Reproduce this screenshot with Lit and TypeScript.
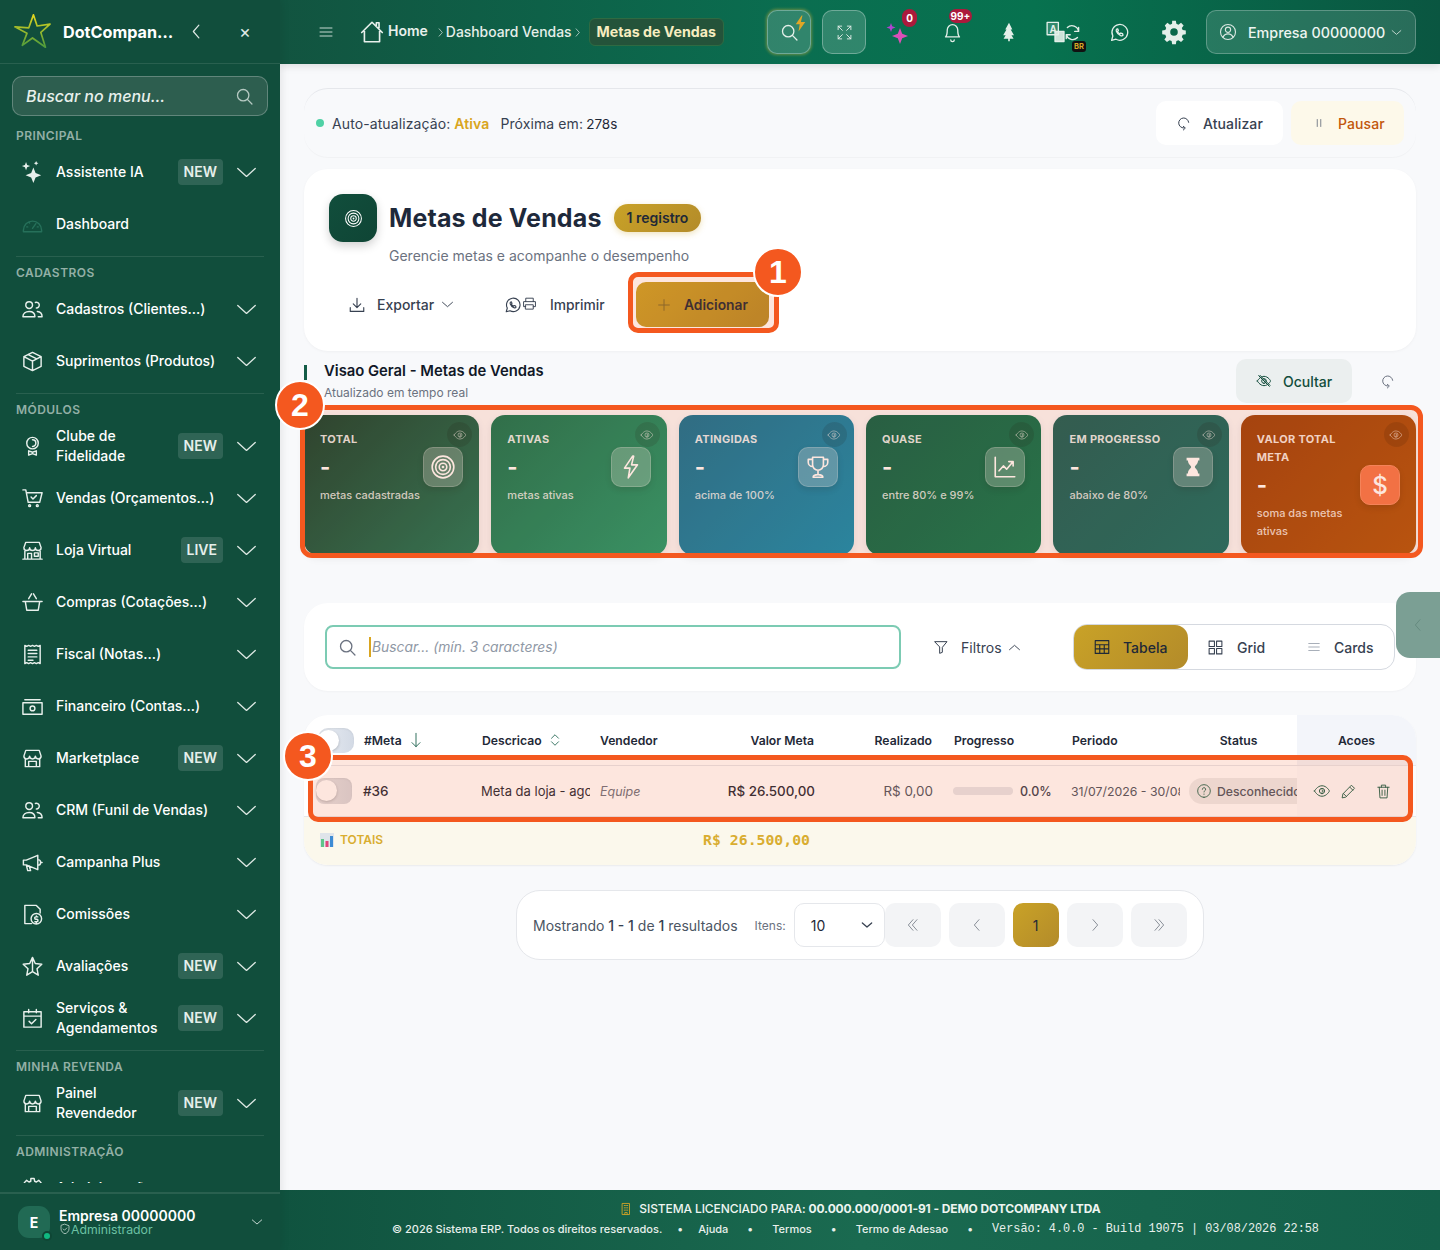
import { LitElement, html, css } from "lit";
import { customElement } from "lit/decorators.js";

const icon = (d: string, size = 20, sw = 1.5) => html`<svg viewBox="0 0 24 24" width=${size} height=${size} fill="none" stroke="currentColor" stroke-width=${sw} stroke-linecap="round" stroke-linejoin="round"><path d=${d}></path></svg>`;
const solid = (d: string, size = 20) => html`<svg viewBox="0 0 24 24" width=${size} height=${size} fill="currentColor"><path d=${d}></path></svg>`;

const I = {
  down: "M4 8.500l8 7 8-7",
  wide: "M2 7.500l10 9 10-9",
  up: "M4 15.500l8-7 8 7",
  left: "M15 4l-7 8 7 8",
  right: "M9 4l7 8-7 8",
  dleft: "M12 4l-7 8 7 8M18 4l-7 8 7 8",
  dright: "M6 4l7 8-7 8M12 4l7 8-7 8",
  search: "M20.500 20.500l-5.200-5.200M10.500 17a6.500 6.500 0 1 0 0-13 6.500 6.500 0 0 0 0 13z",
  spark: "M13.500 7l2.400 6.100L22 15.500l-6.100 2.400L13.500 24l-2.400-6.100L5 15.500l6.100-2.400zM5.500 1l1.200 3.300L10 5.500 6.700 6.700 5.500 10 4.300 6.700 1 5.500l3.300-1.200zM16.500 0l.8 1.700 1.700.8-1.700.8-.8 1.700-.8-1.700-1.700-.8 1.700-.8z",
  gauge: "M2.500 18a9.500 9.500 0 1 1 19 0v1.500h-19zM12 16l3.500-5M6 14.500h1M17 14.500h1M8.500 10l.5.5",
  people: "M8.500 11a3.500 3.500 0 1 0 0-7 3.500 3.500 0 0 0 0 7zM2 19.500c0-3.500 3-5.500 6.500-5.500s6 2 6 5.500zM16 10.500a3 3 0 1 0-1-5.800M17 14c3 .3 5 2.200 5 5.500h-4",
  box: "M12 2.500l9 4.500v10l-9 4.500L3 17V7zM3 7l9 4.500L21 7M12 11.500v10M7.500 4.800l9 4.500",
  award: "M12 14.500a6 6 0 1 0 0-12 6 6 0 0 0 0 12zM12 12a3.500 3.500 0 1 0 0-7M8 16.500l4 1.500 4-1.500V21l-4-1.500L8 21z",
  cart: "M2 3h3l2.500 13h12L22 6H6M9 20.500a1 1 0 1 0 0-2 1 1 0 0 0 0 2zM17 20.500a1 1 0 1 0 0-2 1 1 0 0 0 0 2zM10.500 10.500l2 2 3.500-3.500",
  shop: "M3 9l2-5.500h14L21 9M3 9a3 3 0 0 0 6 0 3 3 0 0 0 6 0 3 3 0 0 0 6 0M4 11.500V21h16v-9.500M2 21h20M7 21v-6h4v6M14 14.500h4v3.500h-4z",
  basket: "M2 11h20M4.500 11l1.500 9h12l1.500-9M8 8l3-5M16 8l-3-5",
  receipt: "M4 2.500l2 1 2-1 2 1 2-1 2 1 2-1 2 1 2-1v19l-2-1-2 1-2-1-2 1-2-1-2 1-2-1-2 1zM7.500 7.500h9M7.500 11h9M7.500 14.500h9M7.500 18h5",
  cash: "M2 8h20v12H2zM4 5h16M12 16.500a2.500 2.500 0 1 0 0-5 2.500 2.500 0 0 0 0 5z",
  store: "M3 9.500l2-6h14l2 6M3 9.500a3 3 0 0 0 6 0 3 3 0 0 0 6 0 3 3 0 0 0 6 0M4.500 12v8.500h15V12M8 20.500V15h8v5.500",
  mega: "M2.500 9.500v5h3l12 5V4.500l-12 5zM5.500 14.500l1.500 6h3l-1.500-5M17.500 9a3 3 0 0 1 0 6M21 12h1",
  comm: "M4 2.500h12l4 4v4M4 2.500v19h7M16 22a5.500 5.500 0 1 0 0-11 5.500 5.500 0 0 0 0 11zM17.500 14.500h-2a1 1 0 0 0 0 2.500h1a1 1 0 0 1 0 2.500h-2M16 13.500v1M16 19.500v1",
  star: "M12 2.500l2.900 6.300 6.800.8-5 4.700 1.300 6.800L12 17.300V2.500zM12 2.500L9.100 8.800l-6.800.8 5 4.700L6 21.100l6-3.800",
  cal: "M3 5h18v16H3zM3 9.500h18M8 2.500V6M16 2.500V6M8.500 15l2.500 2.500 4.500-4.500",
  menu: "M3 6h18M3 12h18M3 18h18",
  home: "M2.500 12.500L12 3l9.500 9.500M5 10v11h14V10M16 6V3.500h2.500V8",
  expand: "M3 8V3h5M3 3l6 6M21 8V3h-5M21 3l-6 6M3 16v5h5M3 21l6-6M21 16v5h-5M21 21l-6-6",
  bell: "M12 3a6 6 0 0 0-6 6c0 6-2 8-2 8h16s-2-2-2-8a6 6 0 0 0-6-6zM10 20.500a2 2 0 0 0 4 0",
  wa: "M3 21l1.400-5A9 9 0 1 1 8 19.700zM9 8c-.8.500-1 1.500-.6 2.700.8 2.200 2.700 4 4.900 4.900 1.200.400 2.200.200 2.700-.600l-.5-1.600-2-.8-1 1c-1.200-.6-2.200-1.600-2.800-2.800l1-1-.8-2z",
  user: "M12 22a10 10 0 1 0 0-20 10 10 0 0 0 0 20zM12 12.500a3.500 3.500 0 1 0 0-7 3.500 3.500 0 0 0 0 7zM5.500 19c1-3 3.500-4.500 6.500-4.500s5.500 1.500 6.500 4.500",
  refresh: "M19 11a7.500 7.500 0 1 0-7.500 8.500M11 22.500l3-3-3-2.500",
  pause: "M9 6v12M15 6v12",
  dl: "M12 3v12M7 10.500l5 5 5-5M3 15.500V20.500h18v-5",
  printer: "M6 9V3.500h12V9M6 17H2.500V9h19v8H18M6 14h12v7H6z",
  plus: "M12 4v16M4 12h16",
  eye: "M2 12s3.600-7 10-7 10 7 10 7-3.600 7-10 7-10-7-10-7zM12 15.500a3.500 3.500 0 1 0 0-7 3.500 3.500 0 0 0 0 7zM12 13.500a1.500 1.500 0 1 0 0-3",
  eyeoff: "M2 12s3.600-7 10-7 10 7 10 7-3.600 7-10 7-10-7-10-7zM12 15.500a3.500 3.500 0 1 0 0-7 3.500 3.500 0 0 0 0 7zM4 4l16 16M6 3.500l15 15",
  target: "M12 22a10 10 0 1 0 0-20 10 10 0 0 0 0 20zM12 18.800a6.800 6.800 0 1 0 0-13.600 6.800 6.800 0 0 0 0 13.600zM12 15.500a3.500 3.500 0 1 0 0-7 3.500 3.500 0 0 0 0 7zM12 12.500a.5.500 0 1 0 0-1 .5.500 0 0 0 0 1z",
  bolt: "M13.500 2L6 13h5l-1.500 9L18 10h-5.500l2-8z",
  trophy: "M7 3h10v7a5 5 0 0 1-10 0zM7 5H3v2.500A4 4 0 0 0 7 11.500M17 5h4v2.500a4 4 0 0 1-4 4M12 15v4M7.500 21.500c0-2 2-2.500 4.500-2.500s4.500.500 4.500 2.500z",
  chart: "M3 3v18h18M6.500 15.500l4-4.500 3 3 6-7M15.500 7h4v4",
  funnel: "M3 4h18l-7 8.500V20l-4 1.500v-9z",
  grid: "M3 3h7.500v7.500H3zM13.500 3H21v7.500h-7.500zM3 13.500h7.500V21H3zM13.500 13.500H21V21h-7.500z",
  table: "M3 3.500h18v17H3zM3 9h18M3 14.500h18M9 9v11.500M15 9v11.500",
  pen: "M16.500 3.500l4 4L8 20l-5 1 1-5zM14 6l4 4M5 15l4 4",
  trash: "M4 6h16M9 6V3h6v3M6 6l1 15h10l1-15M10 10v7.500M14 10v7.500",
  help: "M12 21.500a9.500 9.500 0 1 0 0-19 9.500 9.500 0 0 0 0 19zM9.500 9.500a2.500 2.500 0 1 1 3.500 2.300c-.7.300-1 .8-1 1.700M12 16.500v.5",
  shield: "M12 2.500l8 3v6c0 5-3.500 8.500-8 10-4.500-1.500-8-5-8-10v-6zM8.500 12l2.500 2.500 4.500-4.500",
  building: "M6 2.500h12v19H6zM9 6h2M13 6h2M9 10h2M13 10h2M9 14h2M13 14h2M10 21.500v-3.500h4v3.500",
  sortDown: "M12 2v20M6 16l6 6 6-6",
  sortBoth: "M6 9l6-6 6 6M6 15l6 6 6-6",
};
const GEAR = "M10.300 1.500h3.400l.5 2.900 1.900.8 2.400-1.700 2.400 2.400-1.700 2.400.8 1.900 2.900.5v3.400l-2.900.5-.8 1.900 1.700 2.400-2.400 2.400-2.400-1.700-1.900.8-.5 2.900h-3.400l-.5-2.900-1.900-.8-2.400 1.700-2.400-2.400 1.700-2.400-.8-1.900-2.900-.5v-3.400l2.900-.5.8-1.900L3.500 5.900l2.400-2.400 2.400 1.700 1.900-.8zM12 8.500a3.500 3.500 0 1 0 0 7 3.500 3.500 0 0 0 0-7z";
const TREE = "M12 1l4 8h-2l4 7h-3l2.500 4H13v3h-2v-3H5.500L8 16H5l4-7H7.500z";
const HOUR = "M5 2h14v3h-1.500c0 4-3 5-3.500 7 .5 2 3.500 3 3.500 7H19v3H5v-3h1.500c0-4 3-5 3.500-7-.5-2-3.500-3-3.500-7H5z";
const FONT = css`* { box-sizing: border-box; }`;

type Item = { label: string[]; d: string; badge?: string; chev?: boolean; dim?: boolean };
type Section = { title: string; items: Item[] };

const MENU: Section[] = [
  { title: "PRINCIPAL", items: [
    { label: ["Assistente IA"], d: I.spark, badge: "NEW", chev: true },
    { label: ["Dashboard"], d: I.gauge, dim: true },
  ] },
  { title: "CADASTROS", items: [
    { label: ["Cadastros (Clientes...)"], d: I.people, chev: true },
    { label: ["Suprimentos (Produtos)"], d: I.box, chev: true },
  ] },
  { title: "MÓDULOS", items: [
    { label: ["Clube de", "Fidelidade"], d: I.award, badge: "NEW", chev: true },
    { label: ["Vendas (Orçamentos...)"], d: I.cart, chev: true },
    { label: ["Loja Virtual"], d: I.shop, badge: "LIVE", chev: true },
    { label: ["Compras (Cotações...)"], d: I.basket, chev: true },
    { label: ["Fiscal (Notas...)"], d: I.receipt, chev: true },
    { label: ["Financeiro (Contas...)"], d: I.cash, chev: true },
    { label: ["Marketplace"], d: I.store, badge: "NEW", chev: true },
    { label: ["CRM (Funil de Vendas)"], d: I.people, chev: true },
    { label: ["Campanha Plus"], d: I.mega, chev: true },
    { label: ["Comissões"], d: I.comm, chev: true },
    { label: ["Avaliações"], d: I.star, badge: "NEW", chev: true },
    { label: ["Serviços &", "Agendamentos"], d: I.cal, badge: "NEW", chev: true },
  ] },
  { title: "MINHA REVENDA", items: [
    { label: ["Painel", "Revendedor"], d: I.store, badge: "NEW", chev: true },
  ] },
  { title: "ADMINISTRAÇÃO", items: [
    { label: ["Administração"], d: GEAR, chev: true },
  ] },
];

@customElement("app-sidebar")
class AppSidebar extends LitElement {
  static styles = [FONT, css`
    :host { display: flex; flex-direction: column; width: 280px; height: 1250px; flex: none; background: #114e3c; color: #fff; font-family: Inter, "Liberation Sans", sans-serif; box-shadow: 2px 0 8px rgba(0,0,0,.08); position: relative; z-index: 3; }
    .brand { height: 64px; flex: none; display: flex; align-items: center; padding-left: 14px; border-bottom: 1px solid rgba(255,255,255,.1); }
    .brand .name { width: 110px; margin-left: 12px; font-size: 16.200px; font-weight: 700; white-space: nowrap; }
    .brand .back { margin-left: 14px; display: flex; color: #dfe9e5; }
    .brand .close { margin-left: 33px; font-size: 18px; font-weight: 400; color: #dfe9e5; line-height: 1; }
    .find { flex: none; margin: 12px 12px 3px; height: 40px; display: flex; align-items: center; justify-content: space-between; padding: 0 12px 0 13px; background: #2d5e4f; border: 1px solid rgba(255,255,255,.25); border-radius: 10px; font-size: 16px; font-weight: 500; font-style: italic; color: #e8f0ec; }
    .find span { display: flex; color: #b5c9c2; }
    nav { flex: 1; overflow: hidden; height: 0; min-height: 0; margin-bottom: 9px; }
    .section { margin-top: 6px; padding-top: 4px; border-top: 1px solid rgba(255,255,255,.1); margin-left: 16px; margin-right: 16px; }
    .section:first-child { border-top: 0; margin-top: 0; padding-top: 5px; }
    .title { height: 22px; line-height: 24px; font-size: 12px; font-weight: 600; color: #93b0a6; letter-spacing: .45px; }
    .item { height: 52px; display: flex; align-items: center; margin: 0 -16px; padding-left: 20px; padding-right: 23px; }
    .item .ic { width: 24px; height: 24px; flex: none; display: flex; align-items: center; justify-content: center; color: #e8f0ec; }
    .item .ic.dim { color: #26705a; }
    .item .txt { flex: 1; margin-left: 12px; font-size: 14px; font-weight: 500; line-height: 20px; }
    .item .txt div { white-space: nowrap; }
    .badge { height: 26px; line-height: 26px; padding: 0 6px; background: rgba(255,255,255,.13); border-radius: 4px; font-size: 14px; font-weight: 600; color: #e6efeb; }
    .chev { display: flex; margin-left: 13px; color: #dde8e3; }
    .me { flex: none; height: 58px; display: flex; align-items: center; padding-left: 18px; border-top: 2px solid rgba(255,255,255,.1); }
    .ava { position: relative; width: 32px; height: 32px; border-radius: 11px; background: #216a54; display: flex; align-items: center; justify-content: center; font-size: 14px; font-weight: 700; }
    .ava i { position: absolute; right: -2px; bottom: -3px; width: 10px; height: 10px; border-radius: 50%; background: #10b981; border: 2px solid #0f4635; }
    .who { margin-left: 9px; flex: 1; }
    .who b { display: block; font-size: 14px; font-weight: 600; line-height: 14px; }
    .who span { display: flex; align-items: center; font-size: 12.300px; line-height: 13px; color: #6cc2a4; }
    .who span svg { color: #cfe0da; }
    .me .chev { margin: 0 16px 0 0; }
  `];

  render() {
    return html`
      <div class="brand">
        <svg viewBox="0 0 40 40" width="37" height="37" fill="none" stroke-width="1.800" stroke-linejoin="round">
          <defs><linearGradient id="st" x1="0" y1="0" x2="0" y2="1"><stop offset="0" stop-color="#e6d81e"></stop><stop offset="1" stop-color="#4c9a3c"></stop></linearGradient></defs>
          <path stroke="url(#st)" d="M21 2l4 12 14-2-10 9 5 16-14-10-11 8 5-13L1 15l15 1z"></path>
        </svg>
        <div class="name">DotCompan…</div>
        <span class="back">${icon(I.left, 19)}</span>
        <span class="close">×</span>
      </div>
      <div class="find">Buscar no menu...<span>${icon(I.search, 21)}</span></div>
      <nav>
        ${MENU.map((s) => html`
          <div class="section">
            <div class="title">${s.title}</div>
            ${s.items.map((it) => html`
              <div class="item">
                <span class="ic ${it.dim ? "dim" : ""}">${it.d === I.spark ? solid(it.d, 22) : icon(it.d, 23, 1.500)}</span>
                <div class="txt">${it.label.map((l) => html`<div>${l}</div>`)}</div>
                ${it.badge ? html`<span class="badge">${it.badge}</span>` : ""}
                ${it.chev ? html`<span class="chev">${icon(I.wide, 21)}</span>` : ""}
              </div>
            `)}
          </div>
        `)}
      </nav>
      <div class="me">
        <div class="ava">E<i></i></div>
        <div class="who"><b>Empresa 00000000</b><span>${icon(I.shield, 12)}Administrador</span></div>
        <span class="chev">${icon(I.down, 14)}</span>
      </div>
    `;
  }
}

@customElement("app-topbar")
class AppTopbar extends LitElement {
  static styles = [FONT, css`
    :host { display: flex; align-items: center; height: 64px; flex: none; padding: 0 24px 0 38px; background: linear-gradient(90deg, #125440 0%, #0a6e50 45%, #07724f 65%, #0a5641 100%); color: #fff; font-family: Inter, "Liberation Sans", sans-serif; box-shadow: 0 2px 8px rgba(0,0,0,.12); position: relative; z-index: 2; }
    .crumbs { display: flex; align-items: center; flex: 1; }
    .burger { display: flex; color: #c6d8d1; margin-right: 25px; }
    .home { display: flex; align-items: center; gap: 3px; color: #e8f0ec; }
    .home span { font-size: 14px; font-weight: 600; position: relative; top: -2px; }
    .sep { display: flex; margin: 0 1px 0 7px; color: #dce8e3; }
    .link { font-size: 13.900px; font-weight: 500; color: #e6efea; margin-left: -1px; }
    .sep.two { margin: 0 6px 0 0; }
    .cur { height: 28px; line-height: 26px; padding: 0 7px; background: #24533a; border: 1px solid #2f6a42; border-radius: 6px; font-size: 14.200px; font-weight: 700; color: #f7edc0; }
    .tools { display: flex; align-items: center; gap: 11px; }
    .tool { position: relative; width: 44px; height: 44px; display: flex; align-items: center; justify-content: center; color: #e3efe9; }
    .boxed { background: rgba(255,255,255,.16); border: 1px solid rgba(255,255,255,.3); border-radius: 10px; }
    .glow { box-shadow: 0 0 3px 1px rgba(216,180,60,.45); }
    .bolt { position: absolute; top: 3px; right: 0; color: #e0a626; display: flex; }
    .spk { margin-left: -1px; }
    .bl { margin-left: -1px; margin-right: 2px; }
    .num { position: absolute; background: #ab1a3c; color: #fff; font-size: 10px; font-weight: 700; line-height: 16px; height: 16px; min-width: 15px; border-radius: 9px; text-align: center; padding: 0 3px; }
    .n0 { top: -1px; right: 3px; height: 18px; line-height: 18px; }
    .n99 { top: -1px; right: 2px; height: 14px; line-height: 14px; width: 23px; padding: 0; }
    .br { position: absolute; right: 0; bottom: 2px; background: #111; color: #d5a826; font-size: 7.500px; font-weight: 700; line-height: 11px; padding: 0 2px; border-radius: 3px; }
    .letter { font-family: "Liberation Sans", sans-serif; font-size: 9px; font-weight: 700; fill: #e3efe9; }
    .co { width: 210px; height: 44px; margin-left: -1px; display: flex; align-items: center; padding: 0 12px 0 12px; background: rgba(255,255,255,.13); border: 1px solid rgba(255,255,255,.25); border-radius: 10px; }
    .co .nm { margin-left: 11px; flex: 1; font-size: 14.300px; font-weight: 500; color: #eef5f1; white-space: nowrap; }
    .co svg { flex: none; color: #dbe8e2; }
  `];

  render() {
    return html`
      <div class="crumbs">
        <span class="burger">${icon(I.menu, 16)}</span>
        <div class="home">${icon(I.home, 26, 1.500)}<span>Home</span></div>
        <span class="sep">${icon(I.right, 11)}</span>
        <span class="link">Dashboard Vendas</span>
        <span class="sep two">${icon(I.right, 11)}</span>
        <span class="cur">Metas de Vendas</span>
      </div>
      <div class="tools">
        <div class="tool boxed glow">${icon(I.search, 21)}<span class="bolt">${solid(I.bolt, 19)}</span></div>
        <div class="tool boxed">${icon(I.expand, 17, 1.300)}</div>
        <div class="tool spk">
          <svg viewBox="0 0 24 24" width="24" height="24">
            <path fill="#dd4fb8" d="M14 8l2.200 5.800L22 16l-5.800 2.200L14 24l-2.200-5.800L6 16l5.800-2.200z"></path>
            <path fill="#b044d0" d="M5 3l1.200 3.300L9.500 7.500 6.200 8.700 5 12 3.800 8.700.5 7.500l3.300-1.200z"></path>
          </svg>
          <span class="num n0">0</span>
        </div>
        <div class="tool bl">${icon(I.bell, 21)}<span class="num n99">99+</span></div>
        <div class="tool">${solid(TREE, 20)}</div>
        <div class="tool">
          <svg viewBox="0 0 32 24" width="36" height="27" fill="none" stroke="currentColor" stroke-width="1.200" stroke-linecap="round" stroke-linejoin="round">
            <rect x="1" y="3" width="10" height="11" fill="currentColor" fill-opacity=".2"></rect>
            <rect x="8" y="11" width="8" height="9" fill="currentColor" fill-opacity=".9"></rect>
            <text class="letter" x="3" y="12" stroke="none">A</text>
            <path d="M29 11a6 6 0 0 0-10-3.500M18 14a6 6 0 0 0 10 2.500M29 7.500V11h-3.500M18 17.500V14h3.500"></path>
          </svg>
          <span class="br">BR</span>
        </div>
        <div class="tool">${icon(I.wa, 21)}</div>
        <div class="tool">${solid(GEAR, 26)}</div>
        <div class="co">${icon(I.user, 18)}<span class="nm">Empresa 00000000</span>${icon(I.down, 13)}</div>
      </div>
    `;
  }
}

const STATS = [
  { cls: "s1", label: "TOTAL", sub: "metas cadastradas", d: I.target },
  { cls: "s2", label: "ATIVAS", sub: "metas ativas", d: I.bolt },
  { cls: "s3", label: "ATINGIDAS", sub: "acima de 100%", d: I.trophy },
  { cls: "s4", label: "QUASE", sub: "entre 80% e 99%", d: I.chart },
  { cls: "s5", label: "EM PROGRESSO", sub: "abaixo de 80%", d: HOUR },
  { cls: "s6", label: "VALOR TOTAL META", sub: "soma das metas ativas", d: "" },
];

@customElement("app-root")
class AppRoot extends LitElement {
  static styles = [FONT, css`
    :host { display: flex; position: relative; width: 1440px; height: 1250px; overflow: hidden; background: #f8f9fb; font-family: Inter, "Liberation Sans", sans-serif; color: #1f2937; }
    .right { flex: 1; display: flex; flex-direction: column; min-width: 0; }
    main { flex: 1; padding: 24px 24px 0; display: flex; flex-direction: column; }
    .auto { height: 69px; display: flex; align-items: center; padding: 0 12px; border-top: 1px solid #e5e7eb; border-radius: 24px; box-shadow: 0 1px 1px rgba(0,0,0,.03); font-size: 14px; letter-spacing: .1px; color: #374151; }
    .dot { width: 8px; height: 8px; border-radius: 50%; background: #4fd1a5; margin-right: 8px; }
    .auto b { color: #d9a520; font-weight: 600; margin-left: 4px; }
    .auto .next { margin-left: 11px; flex: 1; }
    .auto .next em { font-style: normal; color: #1f2937; font-weight: 400; font-size: 13.500px; letter-spacing: 0; margin-left: -1px; }
    .btn { display: inline-flex; align-items: center; height: 44px; border-radius: 10px; font-size: 14px; font-weight: 500; white-space: nowrap; }
    .up { width: 127px; background: #fff; padding-left: 20px; gap: 11px; color: #374151; }
    .pa { width: 113px; background: #fdf9ea; padding-left: 21px; gap: 12px; margin-left: 8px; color: #c2570c; }
    .pa span { color: #6b7280; display: flex; }

    .head { height: 182px; margin-top: 12px; background: #fff; border-radius: 24px; padding: 25px; box-shadow: 0 1px 3px rgba(0,0,0,.04); }
    .tl { display: flex; align-items: center; gap: 12px; }
    .logo { width: 48px; height: 48px; border-radius: 14px; background: linear-gradient(135deg, #114e3c, #0f4535); color: #fff; display: flex; align-items: center; justify-content: center; box-shadow: 0 4px 10px rgba(0,0,0,.18); }
    h1 { margin: 0; font-size: 25px; font-weight: 650; color: #1e293b; line-height: 48px; letter-spacing: .15px; }
    .count { padding: 0 13px; height: 28px; line-height: 28px; border-radius: 14px; background: linear-gradient(135deg, #c9a227, #b38b2a); font-size: 14px; font-weight: 600; color: #1f2937; box-shadow: 0 2px 6px rgba(201,162,39,.3); }
    .desc { margin: 2px 0 0 60px; font-size: 14px; line-height: 24px; color: #6b7280; }
    .acts { display: flex; gap: 12px; margin-top: 14px; height: 45px; }
    .ex { width: 143px; padding-left: 19px; color: #374151; height: 45px; gap: 11px; }
    .ex span { display: flex; margin-left: -5px; }
    .pr { width: 140px; padding-left: 20px; color: #374151; height: 45px; gap: 13px; font-size: 13.800px; }
    .pr span { display: flex; gap: 0; }
    .add { width: 133px; height: 45px; padding-left: 20px; gap: 12px; background: linear-gradient(135deg, #c9a227, #b38b2a); color: #1f2937; font-weight: 600; font-size: 13.800px; }
    .add span { display: flex; color: #7c6a2c; }

    .ov { display: flex; align-items: center; height: 44px; margin-top: 8px; }
    .ov .bar { width: 3px; height: 15px; background: #145c47; margin-right: 17px; align-self: flex-start; margin-top: 6px; }
    .ov h2 { margin: 0; font-size: 14.800px; font-weight: 600; color: #111827; line-height: 24px; }
    .ov p { margin: 0; font-size: 12px; line-height: 20px; color: #6b7280; }
    .ov .txt { flex: 1; }
    .hide { width: 116px; background: #ebefef; padding-left: 20px; gap: 11px; color: #124d3c; }
    .spin { width: 64px; display: flex; justify-content: center; padding-left: 8px; color: #6b7280; }

    .stats { display: grid; grid-template-columns: repeat(6, 1fr); gap: 12.200px; margin-top: 12px; }
    .stat { position: relative; height: 140px; padding: 15px 16px; border-radius: 14px; display: flex; color: #fff; align-items: flex-start; box-shadow: 0 3px 8px rgba(0,0,0,.08); }
    .s1 { background: linear-gradient(135deg, #0f4030, #17785a); }
    .s2 { background: linear-gradient(135deg, #107351, #1a9b6f); }
    .s3 { background: linear-gradient(135deg, #107194, #098db4); }
    .s4 { background: linear-gradient(135deg, #066048, #057850); }
    .s5 { background: linear-gradient(135deg, #135d58, #0c6d65); }
    .s6 { background: linear-gradient(135deg, #98400c, #af540c); }
    .inner { display: flex; align-items: center; width: 100%; }
    .col { flex: 1; min-width: 0; }
    .lab { font-size: 11px; font-weight: 700; line-height: 18px; letter-spacing: .3px; color: rgba(255,255,255,.88); }
    .val { font-size: 22px; font-weight: 700; line-height: 38px; }
    .sub { font-size: 11px; font-weight: 500; line-height: 18px; color: rgba(255,255,255,.8); white-space: normal; }
    .box { width: 40px; height: 40px; flex: none; border-radius: 10px; background: rgba(255,255,255,.25); border: 1px solid rgba(255,255,255,.2); display: flex; align-items: center; justify-content: center; color: #fff; font-size: 24px; font-weight: 500; box-shadow: 0 3px 6px rgba(0,0,0,.12); }
    .s6 .box { background: #f2764a; border-color: #f58b63; }
    .peek { position: absolute; top: 7px; right: 7px; width: 25px; height: 25px; border-radius: 50%; background: rgba(0,0,0,.12); display: flex; align-items: center; justify-content: center; color: rgba(255,255,255,.5); }

    .filters { margin-top: 48px; height: 88px; background: #fff; border-radius: 24px; display: flex; align-items: center; padding: 0 21px; box-shadow: 0 1px 2px rgba(0,0,0,.03); }
    .q { width: 576px; height: 44px; border: 2px solid #7ccbb3; border-radius: 8px; display: flex; align-items: center; padding-left: 10px; font-size: 13.850px; font-style: italic; color: #8f98a5; }
    .q span { display: flex; color: #6b7280; margin-right: 11px; }
    .q i { width: 2px; height: 20px; background: #d9a520; margin-right: 1px; }
    .fl { display: flex; align-items: center; margin-left: 32px; font-size: 14px; color: #374151; width: 140px; }
    .fl .tx { margin: 0 5px 0 12px; }
    .fl span { display: flex; }
    .seg { display: flex; width: 322px; height: 46px; border: 1px solid #d5d9e0; border-radius: 14px; }
    .seg div { display: flex; align-items: center; font-size: 14px; color: #374151; font-weight: 500; }
    .seg .on { width: 114px; padding-left: 19px; gap: 12px; background: linear-gradient(135deg, #c9a227, #b38b2a); border-radius: 13px; color: #1f2937; }
    .seg .g { width: 100px; padding-left: 19px; gap: 13px; }
    .seg .cd { padding-left: 19px; gap: 13px; }
    .seg .cd span { color: #9ca3af; display: flex; }

    .tbl { margin-top: 24px; height: 150px; background: #fff; border-radius: 24px; overflow: hidden; box-shadow: 0 1px 2px rgba(0,0,0,.06); }
    .row { display: grid; grid-template-columns: 50px repeat(7, 118px) 117px 119px; align-items: center; }
    .row > div { padding: 0 10px; white-space: nowrap; overflow: hidden; height: 100%; display: flex; align-items: center; }
    .hd { height: 51px; border-bottom: 1px solid #e5e7eb; font-size: 12.200px; font-weight: 600; color: #1f2937; }
    .bd { height: 51px; font-size: 13px; color: #1f2937; border-bottom: 1px solid #e5e7eb; }
    .row > .r { justify-content: flex-end; padding-right: 12px; }
    .bd > .r { padding-right: 11px; }
    .row > .c { justify-content: center; }
    .sort { display: flex; margin-left: 6px; color: #145c47; }
    .ac { background: #f3f5fa; }
    .bd .ac { background: #fcfcfd; }
    .row > .tg { padding: 0; overflow: visible; }
    .toggle { display: block; width: 42px; height: 25px; margin-left: 14px; border-radius: 10px; background: linear-gradient(90deg, #e8ecf2, #d3dae5); position: relative; box-shadow: inset 0 1px 2px rgba(0,0,0,.06); }
    .toggle i { position: absolute; left: 0; top: 2px; width: 21px; height: 21px; border-radius: 50%; background: #fff; box-shadow: 0 1px 3px rgba(0,0,0,.2); }
    .bd .toggle { margin-left: 12px; width: 36px; height: 26px; border-radius: 8px; background: linear-gradient(90deg, #e4e4e8, #d6d8de); }
    .row > .idc { font-weight: 500; padding-left: 9px; font-size: 13.500px; }
    .row > .dsc { padding-left: 9px; padding-right: 0; }
    .row > .sel { font-style: italic; font-size: 12.500px; color: #6b7280; }
    .money { font-size: 13.400px; font-weight: 500; }
    .zero { font-size: 13.400px; color: #4b5563; }
    .row > .gr { padding-left: 9px; }
    .pg { width: 60px; height: 8px; border-radius: 4px; background: #e5e7eb; flex: none; margin-right: 7px; }
    .pc { font-size: 12.500px; font-weight: 500; color: #374151; }
    .row > .per { padding-left: 9px; padding-right: 0; font-size: 12.300px; color: #4b5563; }
    .per span { display: block; width: 109px; overflow: hidden; }
    .row > .st { padding-left: 9px; padding-right: 0; }
    .pill { display: flex; align-items: center; gap: 5px; height: 26px; padding: 0 10px 0 7px; border-radius: 13px; background: rgba(0,0,0,.07); font-size: 12.200px; font-weight: 500; color: #4b5563; flex: none; }
    .pill svg { color: #145c47; }
    .row > .acts2 { padding: 0 0 0 16px; color: #145c47; gap: 9px; }
    .acts2 span { display: flex; }
    .acts2 .tr { margin-left: 9px; }
    .tot { height: 48px; display: grid; grid-template-columns: 390px 116px; align-items: center; background: #fbf8ec; padding-bottom: 3px; }
    .tot .a { display: flex; align-items: center; gap: 6px; padding-left: 16px; font-size: 12px; font-weight: 600; color: #d9ad30; }
    .tot .a svg { flex: none; }
    .tot .b { font-family: "DejaVu Sans Mono", "Liberation Mono", monospace; font-size: 14.800px; font-weight: 700; color: #d9ad30; white-space: nowrap; text-align: right; }

    .pager { align-self: center; margin-top: 25px; width: 688px; height: 70px; background: #fff; border: 1px solid #e5e7eb; border-radius: 24px; display: flex; align-items: center; padding-left: 16px; font-size: 14px; color: #4b5563; }
    .pager b { font-weight: 500; color: #374151; }
    .pager small { margin-left: 17px; font-size: 12px; color: #6b7280; }
    .pick { width: 91px; height: 44px; margin-left: 8px; border: 1px solid #e5e7eb; border-radius: 10px; display: flex; align-items: center; justify-content: space-between; padding: 0 10px 0 16px; color: #1f2937; }
    .pick span { display: flex; color: #374151; }
    .nav { width: 56px; height: 44px; border-radius: 10px; background: #f3f4f6; display: flex; align-items: center; justify-content: center; color: #8a9099; }
    .nav + .nav { margin-left: 8px; }
    .nav.on { width: 46px; background: linear-gradient(135deg, #c9a227, #b38b2a); color: #1f2937; }

    footer { height: 60px; flex: none; background: linear-gradient(90deg, #10533f, #1a6a50 50%, #14604a); color: #fff; display: flex; flex-direction: column; align-items: center; justify-content: center; gap: 4px; padding-bottom: 2px; }
    .lic { display: flex; align-items: center; font-size: 12px; font-weight: 500; line-height: 16px; color: #eef5f1; letter-spacing: -.1px; }
    .lic span { display: flex; color: #d6a526; margin-right: 6px; }
    .lic b { font-weight: 700; margin-left: 3px; }
    .legal { display: flex; align-items: center; font-size: 11px; font-weight: 500; line-height: 16px; color: #e8f0ec; padding-right: 9px; }
    .legal i { font-style: normal; margin: 0 19px; }
    .legal i:first-of-type { margin: 0 15px; }
    .legal code { font-family: "Liberation Mono", monospace; font-size: 11.850px; font-weight: 400; }

    .tab { position: absolute; left: 1396px; top: 592px; width: 44px; height: 66px; background: #7b9f94; border-radius: 14px 0 0 14px; display: flex; align-items: center; padding-left: 14px; color: #668b80; z-index: 4; }
    .mark { position: absolute; border: 5px solid #f4581f; background: rgba(244,88,31,.15); z-index: 5; }
    .m1 { left: 628px; top: 272px; width: 151px; height: 61px; border-radius: 10px; }
    .m2 { left: 300px; top: 405px; width: 1123px; height: 153px; border-radius: 12px; }
    .m3 { left: 308px; top: 755px; width: 1105px; height: 67px; border-radius: 10px; }
    .pin { position: absolute; width: 50px; height: 50px; border-radius: 50%; background: #f4581f; border: 2px solid #fff; color: #fff; font-family: "Liberation Sans", sans-serif; font-size: 32px; font-weight: 700; display: flex; align-items: center; justify-content: center; z-index: 6; }
    .p1 { left: 753px; top: 247px; }
    .p2 { left: 275px; top: 380px; }
    .p3 { left: 283px; top: 731px; }
  `];

  render() {
    return html`
      <app-sidebar></app-sidebar>
      <div class="right">
        <app-topbar></app-topbar>
        <main>
          <div class="auto">
            <i class="dot"></i>Auto-atualização: <b>Ativa</b>
            <span class="next">Próxima em: <em>278s</em></span>
            <span class="btn up">${icon(I.refresh, 16)}Atualizar</span>
            <span class="btn pa"><span>${icon(I.pause, 14)}</span>Pausar</span>
          </div>

          <section class="head">
            <div class="tl">
              <div class="logo">${icon(I.target, 19, 1.300)}</div>
              <h1>Metas de Vendas</h1>
              <span class="count">1 registro</span>
            </div>
            <div class="desc">Gerencie metas e acompanhe o desempenho</div>
            <div class="acts">
              <span class="btn ex">${icon(I.dl, 18)}Exportar<span>${icon(I.down, 15)}</span></span>
              <span class="btn pr"><span>${icon(I.wa, 18)}${icon(I.printer, 15)}</span>Imprimir</span>
              <span class="btn add"><span>${icon(I.plus, 16)}</span>Adicionar</span>
            </div>
          </section>

          <div class="ov">
            <i class="bar"></i>
            <div class="txt">
              <h2>Visao Geral - Metas de Vendas</h2>
              <p>Atualizado em tempo real</p>
            </div>
            <span class="btn hide">${icon(I.eyeoff, 16)}Ocultar</span>
            <span class="btn spin">${icon(I.refresh, 16)}</span>
          </div>

          <div class="stats">
            ${STATS.map((s) => html`
              <div class="stat ${s.cls}">
                <span class="peek">${icon(I.eye, 14)}</span>
                <div class="inner">
                  <div class="col">
                    <div class="lab">${s.label}</div>
                    <div class="val">-</div>
                    <div class="sub">${s.sub}</div>
                  </div>
                  <div class="box">${s.d === HOUR ? solid(s.d, 22) : s.d ? icon(s.d, 26, 1.500) : "$"}</div>
                </div>
              </div>
            `)}
          </div>

          <div class="filters">
            <div class="q"><span>${icon(I.search, 21)}</span><i></i>Buscar... (mín. 3 caracteres)</div>
            <div class="fl">${icon(I.funnel, 16)}<span class="tx">Filtros</span><span>${icon(I.up, 15)}</span></div>
            <div class="seg">
              <div class="on">${icon(I.table, 18)}Tabela</div>
              <div class="g">${icon(I.grid, 17)}Grid</div>
              <div class="cd"><span>${icon(I.menu, 14)}</span>Cards</div>
            </div>
          </div>

          <div class="tbl">
            <div class="row hd">
              <div class="tg"><span class="toggle"><i></i></span></div>
              <div>#Meta<span class="sort">${icon(I.sortDown, 16, 1.300)}</span></div>
              <div>Descricao<span class="sort">${icon(I.sortBoth, 14, 1.400)}</span></div>
              <div>Vendedor</div>
              <div class="r">Valor Meta</div>
              <div class="r">Realizado</div>
              <div>Progresso</div>
              <div>Periodo</div>
              <div class="c">Status</div>
              <div class="c ac">Acoes</div>
            </div>
            <div class="row bd">
              <div class="tg"><span class="toggle"><i></i></span></div>
              <div class="idc">#36</div>
              <div class="dsc">Meta da loja - agosto</div>
              <div class="sel">Equipe</div>
              <div class="r money">R$ 26.500,00</div>
              <div class="r zero">R$ 0,00</div>
              <div class="gr"><span class="pg"></span><span class="pc">0.0%</span></div>
              <div class="per"><span>31/07/2026 - 30/08/2026</span></div>
              <div class="st"><span class="pill">${icon(I.help, 16, 1.300)}Desconhecido</span></div>
              <div class="ac acts2"><span>${icon(I.eye, 18, 1.300)}</span><span>${icon(I.pen, 17, 1.300)}</span><span class="tr">${icon(I.trash, 17, 1.300)}</span></div>
            </div>
            <div class="tot">
              <div class="a">
                <svg viewBox="0 0 14 14" width="14" height="14"><rect width="14" height="14" fill="#dfe4ea"></rect><rect x="1" y="6" width="3" height="8" fill="#5fc48a"></rect><rect x="5.500" y="8" width="3" height="6" fill="#e0457b"></rect><rect x="10" y="3" width="3" height="11" fill="#3d8bd4"></rect></svg>
                TOTAIS
              </div>
              <div class="b">R$ 26.500,00</div>
            </div>
          </div>

          <div class="pager">
            <span>Mostrando <b>1 - 1</b> de <b>1</b> resultados</span>
            <small>Itens:</small>
            <div class="pick">10<span>${icon(I.down, 14, 2.200)}</span></div>
            <div class="nav">${icon(I.dleft, 16)}</div>
            <div class="nav">${icon(I.left, 16)}</div>
            <div class="nav on">1</div>
            <div class="nav">${icon(I.right, 16)}</div>
            <div class="nav">${icon(I.dright, 16)}</div>
          </div>
        </main>
        <footer>
          <div class="lic"><span>${icon(I.building, 14)}</span>SISTEMA LICENCIADO PARA: <b>00.000.000/0001-91 - DEMO DOTCOMPANY LTDA</b></div>
          <div class="legal">© 2026 Sistema ERP. Todos os direitos reservados.<i>•</i>Ajuda<i>•</i>Termos<i>•</i>Termo de Adesao<i>•</i><code>Versão: 4.0.0 - Build 19075 | 03/08/2026 22:58</code></div>
        </footer>
      </div>
      <div class="tab">${icon(I.left, 16)}</div>
      <div class="mark m1"></div><div class="mark m2"></div><div class="mark m3"></div>
      <div class="pin p1">1</div><div class="pin p2">2</div><div class="pin p3">3</div>
    `;
  }
}
